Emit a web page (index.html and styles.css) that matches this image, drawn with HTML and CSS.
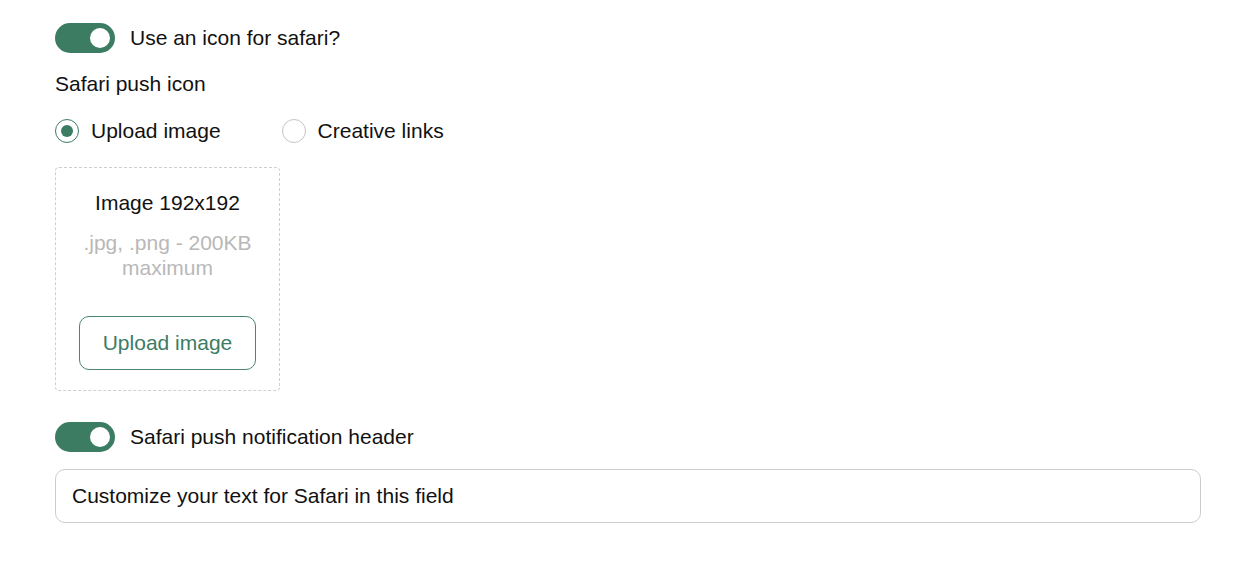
FILE: index.html
```html
<!DOCTYPE html>
<html lang="en">
<head>
<meta charset="utf-8">
<title>Safari settings</title>
<link rel="stylesheet" href="styles.css">
</head>
<body>
<div class="settings">
  <div class="toggle-row">
    <span class="toggle on"><span class="knob"></span></span>
    <span class="toggle-label">Use an icon for safari?</span>
  </div>

  <div class="field-label">Safari push icon</div>

  <div class="radio-group">
    <label class="radio-item">
      <span class="radio checked"><span class="dot"></span></span>
      <span>Upload image</span>
    </label>
    <label class="radio-item">
      <span class="radio"></span>
      <span>Creative links</span>
    </label>
  </div>

  <div class="upload-box">
    <div class="upload-title">Image 192x192</div>
    <div class="upload-hint">.jpg, .png - 200KB maximum</div>
    <button class="upload-btn">Upload image</button>
  </div>

  <div class="toggle-row second">
    <span class="toggle on"><span class="knob"></span></span>
    <span class="toggle-label">Safari push notification header</span>
  </div>

  <div class="text-input">Customize your text for Safari in this field</div>
</div>
</body>
</html>
```

FILE: styles.css
```css
html, body {
  margin: 0;
  padding: 0;
  background: #ffffff;
}

body {
  font-family: "Liberation Sans", Arial, Helvetica, sans-serif;
  font-size: 21px;
  color: #111111;
}

.settings {
  padding: 23px 45px 0 55px;
  display: flex;
  flex-direction: column;
  align-items: flex-start;
}

.toggle-row {
  display: flex;
  align-items: center;
  gap: 15px;
  height: 30px;
}

.toggle {
  width: 60px;
  height: 30px;
  border-radius: 15px;
  background: #3b7c63;
  display: flex;
  align-items: center;
  justify-content: flex-end;
  padding: 0 5px;
  box-sizing: border-box;
}

.knob {
  width: 20px;
  height: 20px;
  border-radius: 50%;
  background: #ffffff;
}

.toggle-label {
  line-height: 24px;
}

.field-label {
  margin-top: 19px;
  line-height: 24px;
}

.radio-group {
  margin-top: 23px;
  display: flex;
  gap: 61px;
  height: 24px;
  align-items: center;
}

.radio-item {
  display: flex;
  align-items: center;
  gap: 12px;
  line-height: 24px;
}

.radio {
  width: 24px;
  height: 24px;
  border-radius: 50%;
  border: 1px solid #c4c4c4;
  box-sizing: border-box;
  display: flex;
  align-items: center;
  justify-content: center;
}

.radio.checked {
  border-color: #3b7c63;
}

.dot {
  width: 12px;
  height: 12px;
  border-radius: 50%;
  background: #3b7c63;
}

.upload-box {
  margin-top: 24px;
  width: 225px;
  height: 224px;
  box-sizing: border-box;
  border: 1px dashed #cfcfcf;
  border-radius: 4px;
  padding: 23px 20px 0;
  display: flex;
  flex-direction: column;
  align-items: center;
  text-align: center;
}

.upload-title {
  line-height: 24px;
}

.upload-hint {
  margin-top: 15px;
  line-height: 25px;
  color: #b8b8b8;
}

.upload-btn {
  margin-top: 36px;
  width: 177px;
  height: 54px;
  box-sizing: border-box;
  border: 1.5px solid #4a8670;
  border-radius: 10px;
  background: #ffffff;
  color: #3b7c63;
  font-family: inherit;
  font-size: 21px;
  padding: 0;
}

.toggle-row.second {
  margin-top: 31px;
}

.text-input {
  margin-top: 17px;
  align-self: stretch;
  height: 54px;
  box-sizing: border-box;
  border: 1px solid #cccccc;
  border-radius: 10px;
  padding: 0 16px;
  display: flex;
  align-items: center;
}
```
